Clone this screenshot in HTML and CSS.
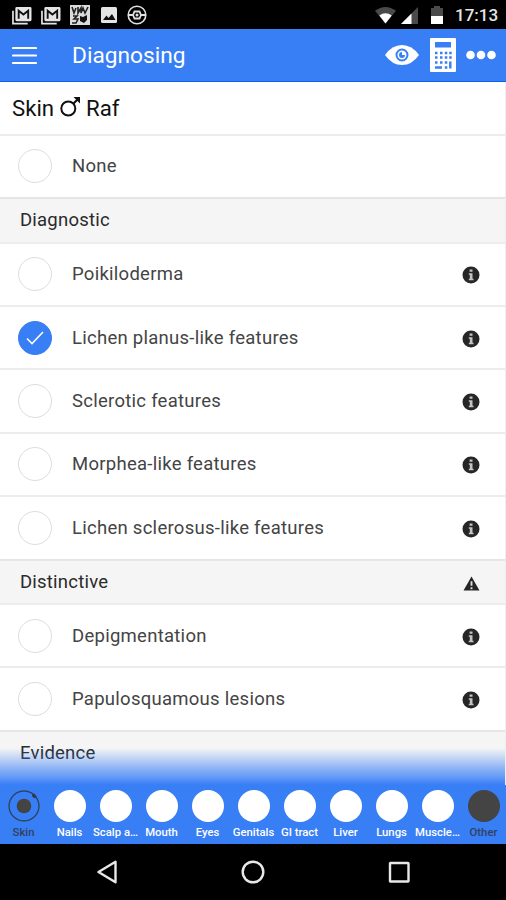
FILE: index.html
```
<!DOCTYPE html>
<html lang="en">
<head>
  <meta charset="UTF-8" />
  <meta name="viewport" content="width=device-width, initial-scale=1.0" />
  <title>Diagnosing</title>
  <link rel="stylesheet" href="styles.css">
</head>
<body>
  <!-- Shared icons -->
  <svg width="0" height="0" class="defs">
    <symbol id="info" viewBox="0 0 18 18">
      <circle cx="9" cy="9" r="8.5" fill="#262626" />
      <path d="M7.6 3.5h2.9v2.3H7.6zM6.8 7.2h3.7v5.500h1v1.500H6.8v-1.500h1V8.700h-1z" fill="#c4c4c4" />
    </symbol>
    <symbol id="mail" viewBox="0 0 22 20">
      <path d="M1.500 5v13.500H17" fill="none" stroke="#e4e4e4" stroke-width="1.800" />
      <rect x="4" y="1" width="17" height="15" rx="1.500" fill="#e4e4e4" />
      <path d="M7.500 13.500V5l5 4 5-4v8.500" fill="none" stroke="#111" stroke-width="2" />
    </symbol>
  </svg>

  <div class="screen">
    <div class="status-bar">
      <svg class="mail" viewBox="0 0 22 20"><use href="#mail" /></svg>
      <svg class="mail second" viewBox="0 0 22 20"><use href="#mail" /></svg>
      <svg class="app" viewBox="0 0 20 20">
        <rect width="20" height="20" fill="#dcdcdc" />
        <path d="M2 2l2 6 2-5M8 2v6l3-5v5l2-5 2 5 3-6M3 11h4l-3 3h4l-2 4H2" fill="none" stroke="#222" stroke-width="1.600" />
        <path d="M10 11l3 1 4-2v5l-3 3-4-2z" fill="#111" />
      </svg>
      <svg class="photo" viewBox="0 0 16 16">
        <rect width="16" height="16" rx="1.500" fill="#e4e4e4" />
        <path d="M2 13l3.500-4.500 2 2.500L11 7l3.500 6z" fill="#111" />
      </svg>
      <svg class="ball" viewBox="0 0 20 20">
        <g fill="none" stroke="#e0e0e0">
          <circle cx="10" cy="10" r="8.800" stroke-width="1.600" />
          <path d="M1.500 10H6l1.500-3.500h5L14 10h4.500M6 10l1.500 3.500h5L14 10" stroke-width="1.800" />
        </g>
        <circle cx="10" cy="10" r="1.500" fill="#e0e0e0" />
      </svg>
      <span class="spacer"></span>
      <svg class="wifi" viewBox="0 0 22 18">
        <path d="M0 4.500Q11-3.500 22 4.500L11 18z" fill="#4a4a4a" />
        <path d="M4.500 9.500Q11 5 17.500 9.500L11 18z" fill="#fff" />
      </svg>
      <svg class="signal" viewBox="0 0 17 17">
        <path d="M0 17L17 0v17z" fill="#4a4a4a" />
        <path d="M0 17L10.500 6.500V17z" fill="#fff" />
      </svg>
      <svg class="battery" viewBox="0 0 12 18">
        <path d="M0 2h3V0h6v2h3v9H0z" fill="#4a4a4a" />
        <path d="M0 10h12v8H0z" fill="#fff" />
      </svg>
      <span class="clock">17:13</span>
    </div>

    <header class="app-bar">
      <svg class="menu" viewBox="0 0 25 19">
        <path d="M1 2h23M1 9.500h23M1 17h23" stroke="#fff" stroke-width="2.200" stroke-linecap="round" />
      </svg>
      <h1>Diagnosing</h1>
      <svg class="eye" viewBox="0 0 34 22">
        <path d="M0 11Q7 1 17 1t17 10Q27 21 17 21T0 11z" fill="#fff" />
        <circle cx="17" cy="11" r="5.500" fill="none" stroke="#387ef5" stroke-width="2" />
        <path d="M17 8v3h3a3 3 0 1 1-3-3z" fill="#387ef5" />
      </svg>
      <svg class="calc" viewBox="0 0 26 34">
        <rect width="26" height="34" rx="1" fill="#fff" />
        <rect x="5" y="4" width="16" height="5.500" fill="#387ef5" />
        <g fill="none" stroke="#387ef5" stroke-width="2.400">
          <path d="M5 15h2.500M10 15h2.500M14.800 15h2.500M19.200 15h2.500M5 19.500h2.500M10 19.500h2.500M14.800 19.500h2.500M19.200 19.500h2.500M5 24.500h2.500M10 24.500h2.500M14.800 24.500h2.500" />
          <path d="M20.300 23.500v7M5 29.500h7M14.800 29.500h2.500" />
        </g>
      </svg>
      <svg class="more" viewBox="0 0 30 10">
        <g fill="#fff"><circle cx="4.500" cy="5" r="4.300" /><circle cx="15" cy="5" r="4.300" /><circle cx="25.500" cy="5" r="4.300" /></g>
      </svg>
    </header>

    <main>
      <div class="patient">
        <span>Skin</span>
        <svg class="male" viewBox="0 0 21 21">
          <circle cx="8.300" cy="12.500" r="7" fill="none" stroke="#111" stroke-width="2" />
          <path d="M13 8l5-5" stroke="#111" stroke-width="2.200" />
          <path d="M13.500 1H20v6.500z" fill="#111" />
        </svg>
        <span>Raf</span>
      </div>

      <label class="item"><i class="check"></i><span>None</span></label>

      <h2 class="divider">Diagnostic</h2>
      <label class="item"><i class="check"></i><span>Poikiloderma</span><svg class="info"><use href="#info" /></svg></label>
      <label class="item">
        <i class="check checked"><svg viewBox="0 0 18 14"><path d="M1 7.500L6 12.500 17 1" fill="none" stroke="#fff" stroke-width="1.600" /></svg></i>
        <span>Lichen planus-like features</span><svg class="info"><use href="#info" /></svg>
      </label>
      <label class="item"><i class="check"></i><span>Sclerotic features</span><svg class="info"><use href="#info" /></svg></label>
      <label class="item"><i class="check"></i><span>Morphea-like features</span><svg class="info"><use href="#info" /></svg></label>
      <label class="item"><i class="check"></i><span>Lichen sclerosus-like features</span><svg class="info"><use href="#info" /></svg></label>

      <h2 class="divider">Distinctive
        <svg class="warning" viewBox="0 0 18 16">
          <path d="M9 .5L17.500 15.500H.5z" fill="#262626" />
          <path d="M8 5.500h2v5H8zM8 12h2v2H8z" fill="#ddd" />
        </svg>
      </h2>
      <label class="item"><i class="check"></i><span>Depigmentation</span><svg class="info"><use href="#info" /></svg></label>
      <label class="item"><i class="check"></i><span>Papulosquamous lesions</span><svg class="info"><use href="#info" /></svg></label>

      <h2 class="divider">Evidence</h2>
      <div class="fade"></div>
    </main>

    <nav class="tabs">
      <a class="tab active">
        <svg viewBox="0 0 32 32">
          <circle cx="16" cy="16" r="15" fill="none" stroke="#33415f" stroke-width="1.400" />
          <circle cx="16" cy="16" r="7.300" fill="#444" />
          <circle cx="26.500" cy="5.500" r="2.400" fill="#33384a" />
        </svg>
        <span>Skin</span>
      </a>
      <a class="tab"><i></i><span>Nails</span></a>
      <a class="tab"><i></i><span>Scalp a…</span></a>
      <a class="tab"><i></i><span>Mouth</span></a>
      <a class="tab"><i></i><span>Eyes</span></a>
      <a class="tab"><i></i><span>Genitals</span></a>
      <a class="tab"><i></i><span>GI tract</span></a>
      <a class="tab"><i></i><span>Liver</span></a>
      <a class="tab"><i></i><span>Lungs</span></a>
      <a class="tab"><i></i><span>Muscle…</span></a>
      <a class="tab other"><i></i><span>Other</span></a>
    </nav>

    <div class="nav-bar">
      <svg viewBox="0 0 24 24"><path d="M20.500 1.800v20.400L3.500 12z" /></svg>
      <svg viewBox="0 0 24 24"><circle cx="12" cy="12" r="10.300" /></svg>
      <svg viewBox="0 0 24 24"><rect x="3" y="3" width="18.500" height="18.500" rx=".5" /></svg>
    </div>
  </div>
</body>
</html>
```
FILE: styles.css
```
/* Global styles */
* {
  box-sizing: border-box;
  margin: 0;
  padding: 0;
}
body {
  font-family: Roboto, sans-serif;
  background-color: #fff;
  color: #222;
  overflow: hidden;
}
svg {
  display: block;
  flex: none;
}
.defs {
  position: absolute;
}
.screen {
  display: flex;
  flex-direction: column;
  width: 506px;
  height: 900px;
}

/* Android status bar */
.status-bar {
  display: flex;
  align-items: center;
  height: 29px;
  flex: none;
  padding: 1px 9px 0 11px;
  background-color: #000;
}
.mail {
  width: 22px;
  height: 19px;
}
.second {
  margin-left: 7px;
}
.app {
  width: 20px;
  height: 20px;
  margin-left: 8px;
}
.photo {
  width: 16px;
  height: 16px;
  margin-left: 11px;
}
.ball {
  width: 20px;
  height: 20px;
  margin-left: 10px;
}
.spacer {
  flex: 1;
}
.wifi {
  width: 21px;
  height: 18px;
}
.signal {
  width: 17px;
  height: 17px;
  margin-left: 5px;
}
.battery {
  width: 12px;
  height: 18px;
  margin-left: 13px;
}
.clock {
  width: 42px;
  margin-left: 12px;
  color: #e6e6e6;
  font-size: 17px;
  font-weight: 500;
  white-space: nowrap;
}

/* Title bar */
.app-bar {
  display: flex;
  align-items: center;
  height: 53px;
  flex: none;
  padding: 0 10px 0 12px;
  background-color: #387ef5;
  border-bottom: 1px solid #0c63ee;
}
.menu {
  width: 25px;
  height: 19px;
}
h1 {
  flex: 1;
  margin-left: 35px;
  color: #fff;
  font-size: 22.7px;
  font-weight: 400;
}
.eye {
  width: 34px;
  height: 22px;
}
.calc {
  width: 26px;
  height: 34px;
  margin-left: 11px;
}
.more {
  width: 30px;
  height: 10px;
  margin-left: 10px;
}

/* List */
main {
  position: relative;
  flex: 1;
  min-height: 0;
  overflow: hidden;
  border-right: 1px solid #eee;
}
.patient {
  display: flex;
  align-items: center;
  height: 51.8px;
  padding-left: 12px;
  color: #111;
  font-size: 22.2px;
}
.male {
  width: 21px;
  height: 21px;
  margin: 0 5px 2px 6px;
}
.item {
  display: flex;
  align-items: center;
  height: 63.4px;
  padding: 0 25px 0 18px;
  border-top: 2px solid #ededed;
  color: #444;
  font-size: 18.5px;
  letter-spacing: 0.27px;
}
.item span {
  flex: 1;
}
.check {
  width: 34px;
  height: 34px;
  margin-right: 20px;
  border: 1px solid #ddd;
  border-radius: 50%;
}
.checked {
  display: flex;
  align-items: center;
  justify-content: center;
  background-color: #387ef5;
  border-color: #387ef5;
}
.checked svg {
  width: 18px;
  height: 14px;
}
.info {
  width: 18px;
  height: 18px;
  margin-top: 2px;
}
.divider {
  display: flex;
  align-items: center;
  justify-content: space-between;
  height: 44.4px;
  padding: 0 25px 0 20px;
  background-color: #f5f5f5;
  border-top: 2px solid #e6e6e6;
  color: #2a2a2a;
  font-size: 18.5px;
  font-weight: 400;
  letter-spacing: 0.22px;
}
.warning {
  width: 17px;
  height: 15px;
  margin-top: 3px;
}
.fade {
  position: absolute;
  left: 0;
  right: -1px;
  bottom: 0;
  height: 37px;
  background: linear-gradient(rgba(56, 126, 245, 0), #387ef5);
}

/* Organ tabs */
.tabs {
  display: flex;
  height: 59px;
  flex: none;
  padding-left: 0.5px;
  margin-right: -0.5px;
  background-color: #387ef5;
}
.tab {
  display: flex;
  flex-direction: column;
  align-items: center;
  flex: 1 1 0;
  min-width: 0;
  padding-top: 5px;
  color: #fff;
  font-size: 11.3px;
  font-weight: 500;
  line-height: 14px;
  white-space: nowrap;
}
.tab i,
.tab svg {
  width: 32px;
  height: 32px;
  border-radius: 50%;
}
.tab i {
  background-color: #fff;
}
.tab span {
  margin-top: 4px;
}
.active,
.other {
  color: #33415f;
}
.tab.other i {
  background-color: #444;
}

/* Android navigation */
.nav-bar {
  display: flex;
  justify-content: center;
  align-items: center;
  gap: 122px;
  height: 56px;
  flex: none;
  background-color: #000;
}
.nav-bar svg {
  width: 24px;
  height: 24px;
  fill: none;
  stroke: #e8e8e8;
  stroke-width: 2.4;
  stroke-linejoin: round;
}
```
